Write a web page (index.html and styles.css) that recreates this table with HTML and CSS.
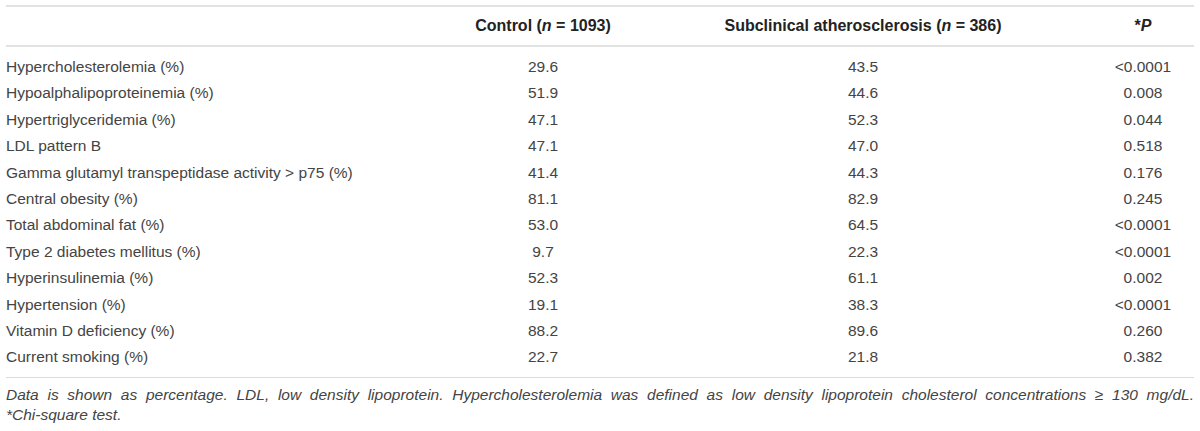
FILE: index.html
```html
<!DOCTYPE html>
<html lang="en">
<head>
    <meta charset="UTF-8">
    <title>Subclinical atherosclerosis risk factors</title>
    <link rel="stylesheet" href="styles.css">
</head>
<body>
    <div class="table-wrap">
        <table class="data-table">
            <colgroup>
                <col class="col-label">
                <col class="col-control">
                <col class="col-sub">
                <col class="col-p">
            </colgroup>
            <thead>
                <tr>
                    <th></th>
                    <th>Control (<i>n</i> = 1093)</th>
                    <th>Subclinical atherosclerosis (<i>n</i> = 386)</th>
                    <th>*<i>P</i></th>
                </tr>
            </thead>
            <tbody>
                <tr><td>Hypercholesterolemia (%)</td><td>29.6</td><td>43.5</td><td>&lt;0.0001</td></tr>
                <tr><td>Hypoalphalipoproteinemia (%)</td><td>51.9</td><td>44.6</td><td>0.008</td></tr>
                <tr><td>Hypertriglyceridemia (%)</td><td>47.1</td><td>52.3</td><td>0.044</td></tr>
                <tr><td>LDL pattern B</td><td>47.1</td><td>47.0</td><td>0.518</td></tr>
                <tr><td>Gamma glutamyl transpeptidase activity &gt; p75 (%)</td><td>41.4</td><td>44.3</td><td>0.176</td></tr>
                <tr><td>Central obesity (%)</td><td>81.1</td><td>82.9</td><td>0.245</td></tr>
                <tr><td>Total abdominal fat (%)</td><td>53.0</td><td>64.5</td><td>&lt;0.0001</td></tr>
                <tr><td>Type 2 diabetes mellitus (%)</td><td>9.7</td><td>22.3</td><td>&lt;0.0001</td></tr>
                <tr><td>Hyperinsulinemia (%)</td><td>52.3</td><td>61.1</td><td>0.002</td></tr>
                <tr><td>Hypertension (%)</td><td>19.1</td><td>38.3</td><td>&lt;0.0001</td></tr>
                <tr><td>Vitamin D deficiency (%)</td><td>88.2</td><td>89.6</td><td>0.260</td></tr>
                <tr><td>Current smoking (%)</td><td>22.7</td><td>21.8</td><td>0.382</td></tr>
            </tbody>
        </table>
        <div class="table-note">
            <p class="note-line full">Data is shown as percentage. LDL, low density lipoprotein. Hypercholesterolemia was defined as low density lipoprotein cholesterol concentrations &ge; 130 mg/dL.</p>
            <p class="note-line">*Chi-square test.</p>
        </div>
    </div>
</body>
</html>
```

FILE: styles.css
```css
* {
    margin: 0;
    padding: 0;
    box-sizing: border-box;
}

body {
    font-family: 'Liberation Sans', Arial, sans-serif;
    background: #fff;
    color: #444;
}

.table-wrap {
    padding: 5px 6px 0;
}

.data-table {
    width: 100%;
    border-collapse: collapse;
    table-layout: fixed;
    font-size: 15.5px;
}

.col-label { width: 446px; }
.col-control { width: 182px; }
.col-sub { width: 458px; }
.col-p { width: 102px; }

.data-table thead tr {
    border-top: 2px solid #e2e2e2;
    border-bottom: 2px solid #e2e2e2;
}

.data-table th {
    height: 40px;
    font-size: 16px;
    font-weight: bold;
    color: #222;
    text-align: center;
}

.data-table td {
    line-height: 26.4px;
    text-align: center;
    white-space: nowrap;
}

.data-table tbody tr:first-child td {
    padding-top: 7px;
}

.data-table tbody tr:last-child td {
    padding-bottom: 6px;
}

.data-table td:first-child {
    text-align: left;
}

.data-table tbody {
    border-bottom: 1px solid #dcdcdc;
}

.table-note {
    padding-top: 7px;
    font-style: italic;
    font-size: 15.5px;
    line-height: 20px;
}

.note-line.full {
    text-align: justify;
    text-align-last: justify;
}
```
